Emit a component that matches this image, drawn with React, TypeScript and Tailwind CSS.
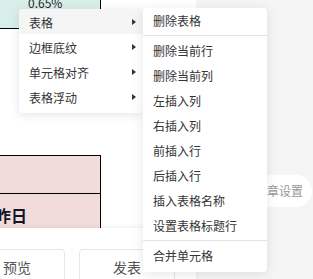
import React from "react";

const menu1 = ["表格", "边框底纹", "单元格对齐", "表格浮动"];
const group2 = ["删除当前行", "删除当前列", "左插入列", "右插入列", "前插入行", "后插入行", "插入表格名称", "设置表格标题行"];

function Arrow() {
  return <span className="absolute right-[7px] top-1/2 -translate-y-1/2 h-0 w-0 border-y-[3.5px] border-l-[4px] border-y-transparent border-l-[#333]" />;
}

export default function App() {
  return (
    <div className="relative flex h-[279px] w-[313px] overflow-hidden bg-[#f5f5f5] font-['Noto_Sans_CJK_SC','Noto_Sans',sans-serif] text-[#333]">
      <div className="flex w-[196px] shrink-0 flex-col bg-white">
        <div className="flex-1 overflow-hidden">
          <div className="h-[29px] w-[101px] overflow-hidden border-b border-r border-black bg-[#d8efe9]">
            <div className="-mt-[5px] pl-[28px] text-[12px] leading-[16px] text-[#222]">0.65%</div>
          </div>
          <div className="mt-[126px] w-[101px] border-r border-t border-black bg-[#f2dcdb]">
            <div className="h-[38px] border-b border-black" />
            <div className="flex h-[41px] items-center -ml-[5px] text-[16px] font-bold leading-none text-[#151528]">昨日</div>
          </div>
        </div>
        <div className="relative z-10 flex h-[51px] shrink-0 gap-[14px] overflow-hidden bg-white pt-[21px] shadow-[0_-1px_4px_rgba(0,0,0,0.07)]">
          <div className="-ml-[31px] flex h-[36px] w-[96px] shrink-0 items-center justify-center rounded-[4px] border border-[#e6e6e6] text-[14px] text-[#555]">预览</div>
          <div className="flex h-[36px] w-[96px] shrink-0 items-center justify-center rounded-[4px] border border-[#e6e6e6] text-[14px] text-[#555]">发表</div>
        </div>
      </div>

      <div className="absolute right-[1px] top-[175px] flex h-[32px] items-center rounded-full bg-white pl-[14px] pr-[9px] text-[12px] text-[#999]">文章设置</div>

      <div className="absolute left-[19px] top-[9px] z-20 w-[124px] overflow-hidden rounded-[4px] bg-white pb-[4px] text-[12px] shadow-[0_2px_10px_rgba(0,0,0,0.1)]">
        {menu1.map((t, i) => (
          <div key={t} className={`relative flex h-[25px] items-center pl-[10px] pt-[2px] ${i === 0 ? "bg-[#f5f5f5]" : ""}`}>
            {t}
            <Arrow />
          </div>
        ))}
      </div>

      <div className="absolute left-[143px] top-[8px] z-30 w-[124px] overflow-hidden rounded-[4px] bg-white pb-[4px] text-[12px] shadow-[0_2px_12px_rgba(0,0,0,0.1)]">
        <div className="flex h-[25px] items-center pl-[10px]">删除表格</div>
        <div className="my-[2px] h-px bg-[#e4e4e4]" />
        {group2.map((t) => (
          <div key={t} className="flex h-[25px] items-center pl-[10px]">{t}</div>
        ))}
        <div className="my-[2px] h-px bg-[#e4e4e4]" />
        <div className="flex h-[25px] items-center pl-[10px]">合并单元格</div>
      </div>
    </div>
  );
}
